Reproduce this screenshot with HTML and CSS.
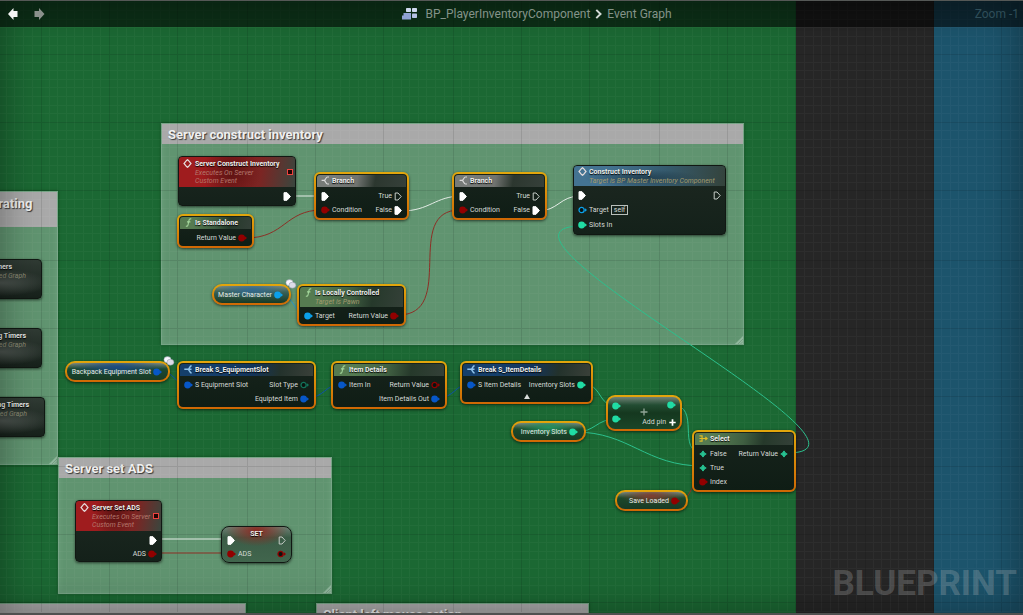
FILE: index.html
```html
<!DOCTYPE html>
<html lang="en">
<head>
<meta charset="utf-8">
<title>BP_PlayerInventoryComponent - Event Graph</title>
<link rel="stylesheet" href="styles.css">
</head>
<body>
<svg class="defs" aria-hidden="true">
  <defs>
    <symbol id="exec" viewBox="0 0 8 9"><path d="M1 .7H4L7.4 4.5 4 8.3H1Z" fill="#fff" stroke="#fff" stroke-linejoin="round"/></symbol>
    <symbol id="exec-open" viewBox="0 0 8 9"><path d="M1.2 1H4L7.2 4.5 4 8H1.2Z" fill="none" stroke="#c4cbc6" stroke-linejoin="round"/></symbol>
    <symbol id="pin" viewBox="0 0 9 8"><circle cx="3.6" cy="4" r="3.4" fill="currentColor"/><path d="M6.6 2 9 4 6.6 6Z" fill="currentColor"/></symbol>
    <symbol id="pin-open" viewBox="0 0 9 8"><circle cx="3.6" cy="4" r="2.6" fill="#0b120e" stroke="currentColor" stroke-width="1.3"/><path d="M7 2.2 9 4 7 5.8Z" fill="currentColor"/></symbol>
    <symbol id="wild" viewBox="0 0 9 8"><path d="M4 .9C5 2.6 5.6 3.200 7.200 4 5.600 4.800 5 5.400 4 7.100 3 5.400 2.400 4.800 .8 4 2.400 3.200 3 2.600 4 .9Z" fill="currentColor" stroke="currentColor"/></symbol>
    <symbol id="event" viewBox="0 0 9 9"><path d="M3.600 1.400 1 4.500 3.600 7.600M5.400 1.400 8 4.500 5.400 7.600M3.200 1.800 4.500.7 5.800 1.800M3.200 7.200 4.500 8.300 5.800 7.200" fill="none" stroke="#e4dcdc" stroke-width="1.200"/></symbol>
    <symbol id="branch" viewBox="0 0 9 9"><path d="M8 1H6.500C4.600 1 4.800 4.300 3 4.400 4.800 4.500 4.600 8 6.500 8H8M.6 4.400H3" fill="none" stroke="#d8d8d8" stroke-width="1.200"/></symbol>
    <symbol id="fn" viewBox="0 0 9 10"><path d="M7.600 1.200C5.800.4 5.200 1.500 4.900 3.200L4.100 7.200C3.800 8.900 3 9.500 1.600 8.900M2.800 4.300H6.600" fill="none" stroke="#a3d69b" stroke-width="1.200"/></symbol>
    <symbol id="break" viewBox="0 0 9 9"><path d="M.3 4.300H4M7.600.8C5.400 1 5.800 3.600 4 4.300 5.800 5 5.400 7.800 7.600 8M5 4.300H7.500" fill="none" stroke="#8fc4ec" stroke-width="1.400"/></symbol>
    <symbol id="select" viewBox="0 0 10 8"><path d="M.5 1H3.400V7H.5M.5 4H9M7 2.200 9 4 7 5.800" fill="none" stroke="#e2bd25" stroke-width="1.300"/></symbol>
    <symbol id="grip" viewBox="0 0 8 8"><path d="M8 0V8H0Z" fill="#a9c9b3" opacity=".65"/><path d="M3 8 8 3M5.500 8 8 5.500" stroke="#668f73" stroke-width=".6"/></symbol>
    <symbol id="bubble" viewBox="0 0 12 10"><g stroke="#8a90a0" stroke-width=".5"><ellipse cx="4.500" cy="3.700" rx="3.600" ry="3.100" fill="#f8f8ff"/><ellipse cx="7.400" cy="6.200" rx="3.500" ry="3" fill="#dcdce8"/></g></symbol>
  </defs>
</svg>

<main class="graph">
  <div class="zone zone-green"></div>
  <div class="zone zone-blue"></div>

  <section class="comment c-rating"><h2>Client rating</h2><svg class="grip"><use href="#grip"/></svg></section>
  <section class="comment c-construct"><h2>Server construct inventory</h2><svg class="grip"><use href="#grip"/></svg></section>
  <section class="comment c-ads"><h2>Server set ADS</h2><svg class="grip"><use href="#grip"/></svg></section>
  <section class="comment c-bottom"><h2></h2></section>
  <section class="comment c-mouse"><h2>Client left mouse action</h2></section>

  <svg class="grid" aria-hidden="true">
    <defs><pattern id="cells" x="40" y="53" width="206" height="206" patternUnits="userSpaceOnUse" viewBox="0 0 206 206">
      <path class="minor" d="M9 0V206M17 0V206M26 0V206M34 0V206M43 0V206M52 0V206M60 0V206M77 0V206M86 0V206M94 0V206M103 0V206M112 0V206M120 0V206M129 0V206M146 0V206M155 0V206M163 0V206M172 0V206M180 0V206M189 0V206M198 0V206M0 9H206M0 17H206M0 26H206M0 34H206M0 43H206M0 52H206M0 60H206M0 77H206M0 86H206M0 94H206M0 103H206M0 112H206M0 120H206M0 129H206M0 146H206M0 155H206M0 163H206M0 172H206M0 180H206M0 189H206M0 198H206"/>
      <path class="major" d="M1 0V206M69 0V206M137 0V206M0 1H206M0 69H206M0 137H206"/>
    </pattern></defs>
    <rect width="100%" height="100%" fill="url(#cells)"/>
  </svg>

  <svg class="wires" aria-hidden="true">
    <g class="w-exec"><path d="M290 196H322M401 211C430 211 435 196 462 196M538 211C558 211 560 196 580 196M155 539H230" /></g>
    <g class="w-bool"><path d="M246 238C285 238 285 210 322 210M398 315C458 315 402 210 460 210M155 553H230M680 500C692 500 690 480 703 480"/></g>
    <g class="w-object"><path d="M281 295C294 295 294 315 307 315"/></g>
    <g class="w-struct"><path d="M160 371C174 371 174 384 187 384M306 398C325 398 325 384 342 384M437 398C455 398 455 384 470 384"/></g>
    <g class="w-slots"><path d="M583 384C602 384 598 406 616 406M575 432C596 432 596 419 616 419M575 432C630 432 645 466 703 466M672 405C702 405 675 453 703 453M787 453C912 453 452 226 582 226"/></g>
  </svg>

  <article class="node plain-node n-timer1"><header><h3>Timers</h3><p>Collapsed Graph</p></header></article>
  <article class="node plain-node n-timer2"><header><h3>Starting Timers</h3><p>Collapsed Graph</p></header></article>
  <article class="node plain-node n-timer3"><header><h3>Starting Timers</h3><p>Collapsed Graph</p></header></article>

  <article class="node event n-construct-event">
    <header><svg class="icon"><use href="#event"/></svg><div><h3>Server Construct Inventory</h3><p>Executes On Server<br>Custom Event</p></div><i class="delegate"></i></header>
    <div class="body"><div class="row"><span></span><span class="port"><svg class="exec"><use href="#exec"/></svg></span></div></div>
  </article>

  <article class="node selected pure n-standalone">
    <header><svg class="icon"><use href="#fn"/></svg><h3>Is Standalone</h3></header>
    <div class="body"><div class="row"><span></span><span class="port">Return Value<svg class="pin bool"><use href="#pin"/></svg></span></div></div>
  </article>

  <article class="node selected flow n-branch1">
    <header><svg class="icon"><use href="#branch"/></svg><h3>Branch</h3></header>
    <div class="body">
      <div class="row"><span class="port"><svg class="exec"><use href="#exec"/></svg></span><span class="port">True<svg class="exec"><use href="#exec-open"/></svg></span></div>
      <div class="row"><span class="port"><svg class="pin bool"><use href="#pin"/></svg>Condition</span><span class="port">False<svg class="exec"><use href="#exec"/></svg></span></div>
    </div>
  </article>

  <article class="node selected flow n-branch2">
    <header><svg class="icon"><use href="#branch"/></svg><h3>Branch</h3></header>
    <div class="body">
      <div class="row"><span class="port"><svg class="exec"><use href="#exec"/></svg></span><span class="port">True<svg class="exec"><use href="#exec-open"/></svg></span></div>
      <div class="row"><span class="port"><svg class="pin bool"><use href="#pin"/></svg>Condition</span><span class="port">False<svg class="exec"><use href="#exec"/></svg></span></div>
    </div>
  </article>

  <article class="node call n-construct">
    <header><svg class="icon"><use href="#event"/></svg><div><h3>Construct Inventory</h3><p>Target is BP Master Inventory Component</p></div></header>
    <div class="body">
      <div class="row"><span class="port"><svg class="exec"><use href="#exec"/></svg></span><span class="port"><svg class="exec"><use href="#exec-open"/></svg></span></div>
      <div class="row"><span class="port"><svg class="pin object"><use href="#pin-open"/></svg>Target<b class="self">self</b></span></div>
      <div class="row"><span class="port"><svg class="pin slots"><use href="#pin"/></svg>Slots In</span></div>
    </div>
  </article>

  <article class="node selected pill p-object n-master"><span class="port">Master Character<svg class="pin object"><use href="#pin"/></svg></span></article>
  <svg class="bubble b-master"><use href="#bubble"/></svg>

  <article class="node selected pure n-local">
    <header><svg class="icon"><use href="#fn"/></svg><div><h3>Is Locally Controlled</h3><p>Target is Pawn</p></div></header>
    <div class="body"><div class="row"><span class="port"><svg class="pin object"><use href="#pin"/></svg>Target</span><span class="port">Return Value<svg class="pin bool"><use href="#pin"/></svg></span></div></div>
  </article>

  <article class="node selected pill p-struct n-backpack"><span class="port">Backpack Equipment Slot<svg class="pin struct"><use href="#pin"/></svg></span></article>
  <svg class="bubble b-backpack"><use href="#bubble"/></svg>

  <article class="node selected break n-break-slot">
    <header><svg class="icon"><use href="#break"/></svg><h3>Break S_EquipmentSlot</h3></header>
    <div class="body">
      <div class="row"><span class="port"><svg class="pin struct"><use href="#pin"/></svg>S Equipment Slot</span><span class="port">Slot Type<svg class="pin enum"><use href="#pin-open"/></svg></span></div>
      <div class="row"><span></span><span class="port">Equipted Item<svg class="pin struct"><use href="#pin"/></svg></span></div>
    </div>
  </article>

  <article class="node selected pure n-details">
    <header><svg class="icon"><use href="#fn"/></svg><h3>Item Details</h3></header>
    <div class="body">
      <div class="row"><span class="port"><svg class="pin struct"><use href="#pin"/></svg>Item In</span><span class="port">Return Value<svg class="pin bool"><use href="#pin-open"/></svg></span></div>
      <div class="row"><span></span><span class="port">Item Details Out<svg class="pin struct"><use href="#pin"/></svg></span></div>
    </div>
  </article>

  <article class="node selected break n-break-details">
    <header><svg class="icon"><use href="#break"/></svg><h3>Break S_ItemDetails</h3></header>
    <div class="body">
      <div class="row"><span class="port"><svg class="pin struct"><use href="#pin"/></svg>S Item Details</span><span class="port">Inventory Slots<svg class="pin slots"><use href="#pin"/></svg></span></div>
      <button class="collapse" aria-label="Hide unconnected pins"><svg viewBox="0 0 6 5"><path d="M3 0 6 5H0Z" fill="#d8dcd9"/></svg></button>
    </div>
  </article>

  <article class="node selected pill p-slots n-slots"><span class="port">Inventory Slots<svg class="pin slots"><use href="#pin"/></svg></span></article>

  <article class="node selected compact n-add">
    <div class="stack"><svg class="pin slots"><use href="#pin"/></svg><svg class="pin slots"><use href="#pin"/></svg></div>
    <div class="stack end"><svg class="pin slots"><use href="#pin"/></svg><button class="add-pin">Add pin<svg viewBox="0 0 7 7"><path d="M3.500 .3V6.700M.3 3.500H6.700" stroke="#fff" stroke-width="1.700"/></svg></button></div>
    <svg class="plus" viewBox="0 0 8 8"><path d="M4 .5V7.500M.5 4H7.500" stroke="#91a698" stroke-width="1.300"/></svg>
  </article>

  <article class="node selected pure n-select">
    <header><svg class="icon"><use href="#select"/></svg><h3>Select</h3></header>
    <div class="body">
      <div class="row"><span class="port"><svg class="pin wild"><use href="#wild"/></svg>False</span><span class="port">Return Value<svg class="pin wild"><use href="#wild"/></svg></span></div>
      <div class="row"><span class="port"><svg class="pin wild"><use href="#wild"/></svg>True</span></div>
      <div class="row"><span class="port"><svg class="pin bool"><use href="#pin"/></svg>Index</span></div>
    </div>
  </article>

  <article class="node selected pill p-bool n-loaded"><span class="port">Save Loaded<svg class="pin bool"><use href="#pin"/></svg></span></article>

  <article class="node event n-ads-event">
    <header><svg class="icon"><use href="#event"/></svg><div><h3>Server Set ADS</h3><p>Executes On Server<br>Custom Event</p></div><i class="delegate"></i></header>
    <div class="body">
      <div class="row"><span></span><span class="port"><svg class="exec"><use href="#exec"/></svg></span></div>
      <div class="row"><span></span><span class="port">ADS<svg class="pin bool"><use href="#pin"/></svg></span></div>
    </div>
  </article>

  <article class="node set n-set">
    <h3>SET</h3>
    <div class="row"><span class="port"><svg class="exec"><use href="#exec"/></svg></span><span class="port"><svg class="exec"><use href="#exec-open"/></svg></span></div>
    <div class="row"><span class="port"><svg class="pin bool"><use href="#pin"/></svg>ADS</span><span class="port"><svg class="pin bool"><use href="#pin-open"/></svg></span></div>
  </article>

  <div class="vignette"></div>
  <div class="watermark">BLUEPRINT</div>

  <nav class="toolbar">
    <div class="history">
      <button aria-label="Back"><svg viewBox="0 0 12 14"><path d="M1 7 6.500 1V4H10.500V10H6.500V13Z" fill="#f4f4f4"/></svg></button>
      <button aria-label="Forward"><svg viewBox="0 0 12 14"><path d="M11.500 7 6 1V4H1.500V10H6V13Z" fill="#8b918c"/></svg></button>
    </div>
    <div class="crumbs">
      <svg class="bp-icon" viewBox="0 0 15 12"><g fill="#cfd8ef"><rect x="4" y="0" width="5" height="4" rx=".7"/><rect x="10" y="0" width="5" height="4" rx=".7"/><path fill="#8fa2d4" d="M1.500 5H9V11.500H0V7.500H1.500Z"/><rect x="10" y="5.500" width="5" height="4.500" rx=".7" fill="#b5c1e3"/></g></svg>
      <a href="#">BP_PlayerInventoryComponent</a>
      <svg class="chevron" viewBox="0 0 6 9"><path d="M1 .8 4.800 4.500 1 8.200" fill="none" stroke="#d4dad6" stroke-width="1.800"/></svg>
      <a href="#">Event Graph</a>
    </div>
    <div class="zoom">Zoom -1</div>
  </nav>
</main>
</body>
</html>
```
FILE: styles.css
```css
* { box-sizing: border-box; }
body { margin: 0; background: #242424; font-family: Roboto, "Liberation Sans", sans-serif; }
h2, h3, p { margin: 0; }
button { margin: 0; padding: 0; border: 0; background: none; color: inherit; font: inherit; }
svg { display: block; flex: none; }
.defs { position: absolute; width: 0; height: 0; }

.graph {
  position: relative;
  min-height: 100vh;
  overflow: hidden;
  background: #262626;
  border-top: 1px solid #555856;
  border-bottom: 2px solid #505050;
}
.grid, .wires, .vignette { position: absolute; inset: 0; width: 100%; height: 100%; }
.grid { top: -1px; }
.wires { top: -1px; }
.vignette { box-shadow: inset 0 0 40px rgba(0, 0, 0, .4); pointer-events: none; }
.minor { stroke: #fff; stroke-opacity: .03; shape-rendering: crispEdges; }
.major { stroke: #000; stroke-opacity: .1; shape-rendering: crispEdges; }

.zone { position: absolute; top: 0; bottom: 0; }
.zone-green { left: 0; width: 796px; background: #1b6833; }
.zone-blue { left: 934px; right: 0; background: #1c546c; }

/* Toolbar */
.toolbar {
  position: relative;
  display: grid;
  grid-template-columns: 1fr auto 1fr;
  align-items: center;
  height: 26px;
  padding: 0 4px 0 7px;
  background: rgba(0, 0, 0, .56);
  font-size: 12px;
  color: #849389;
}
.history { display: flex; gap: 14px; }
.history svg { width: 12px; height: 14px; }
.crumbs { display: flex; align-items: center; gap: 5px; padding-left: 48px; }
.crumbs a { color: inherit; text-decoration: none; }
.bp-icon { width: 15px; height: 12px; margin-right: 3px; }
.chevron { width: 7px; height: 10px; }
.zoom { justify-self: end; color: #2f4e59; }

.watermark {
  position: absolute;
  right: 6px;
  bottom: 7px;
  color: rgba(190, 190, 190, .27);
  font: 700 35px/44px Roboto, sans-serif;
}

/* Comment boxes */
.comment {
  position: absolute;
  border: 1px solid #76a485;
  background: #609470;
  box-shadow: 0 0 3px rgba(0, 40, 10, .5), inset 0 0 6px rgba(140, 190, 155, .3);
}
.comment h2 {
  min-height: 19px;
  padding-left: 6px;
  background: #a9a9a9;
  color: #f0f0f0;
  font-size: 13px;
  line-height: 22px;
  height: 20px;
  text-shadow: 1px 1px 1px #333;
  white-space: nowrap;
}
.grip { position: absolute; right: 0; bottom: 0; width: 8px; height: 8px; }
.c-rating { left: -40px; top: 190px; width: 98px; height: 274px; }
.c-rating h2 { height: 35px; padding: 1px 33px 0 0; text-align: right; }
.c-construct { left: 161px; top: 122px; width: 583px; height: 222px; }
.c-ads { left: 58px; top: 456px; width: 274px; height: 137px; }
.c-bottom { left: -20px; top: 602px; width: 266px; height: 60px; }
.c-mouse { left: 316px; top: 602px; width: 273px; height: 60px; }

/* Wires */
.wires g { fill: none; stroke-width: 1; }
.w-exec { stroke: #e4ece6; }
.w-bool { stroke: #8c2f25; }
.w-object { stroke: #2a92c4; }
.w-struct { stroke: #0d51a8; }
.w-slots { stroke: #2cc08d; }

/* Nodes */
.node {
  position: absolute;
  border: 1px solid #111813;
  border-radius: 4px;
  background: linear-gradient(#1d2821, #14211a);
  box-shadow: 0 1px 3px rgba(0, 0, 0, .6);
  color: #d5dad6;
  font-size: 7px;
  line-height: 14px;
  white-space: nowrap;
}
.node.selected {
  border: 2px solid transparent;
  padding: 1px;
  border-radius: 6px;
  background: linear-gradient(#17231c, #0f1d15) padding-box, linear-gradient(#e2a70c, #cf6704) border-box;
}
.node header {
  position: relative;
  display: flex;
  align-items: flex-start;
  gap: 2px;
  min-height: 12px;
  padding: 1px 4px;
  border-radius: 3px 3px 0 0;
  line-height: 9px;
}
.node h3 { color: #eceeec; font-size: 7px; line-height: 10px; text-shadow: 0 1px 1px #000; }
.node p { color: #a29a6d; font-size: 7px; line-height: 8px; font-style: italic; }
.icon { width: 9px; height: 9px; }
.node.event header { min-height: 30px; padding: 2px 4px; gap: 3px; background: radial-gradient(circle at 45% 50%, #5b1312, transparent 45%), linear-gradient(100deg, #9f1c1e 25%, #7b2523 70%, #39463e); }
.event p { color: #b4786d; }
.call header { background: radial-gradient(ellipse at 45% 60%, rgba(25, 50, 65, .7), transparent 50%), linear-gradient(100deg, #447392 20%, #355a6d 60%, #34433b); }
.pure header { background: linear-gradient(100deg, #567b51 20%, #3f5e41 50%, #26392b 70%, #344038); }
.flow header { background: linear-gradient(100deg, #777b78 20%, #707370 45%, #2c372f 65%, #36403a); }
.break header { background: linear-gradient(100deg, #153f6b 25%, #13345b 55%, #23322c 75%, #3a4039); }
.call header, .n-local header { min-height: 20px; }
.delegate { position: absolute; right: 2px; top: 12px; width: 6px; height: 6px; border: 1px solid #f0433f; background: #250504; }

.body { display: flex; flex-direction: column; padding: 2px 4px 0 4px; }
.row { display: flex; justify-content: space-between; height: 14px; }
.port { display: flex; align-items: center; gap: 2px; }
.pin { width: 9px; height: 8px; }
.exec { width: 8px; height: 9px; }
.bool { color: #920000; }
.object { color: #0ba0ea; }
.struct { color: #0757c8; }
.slots { color: #20dca4; }
.enum { color: #13735a; }
.wild { color: #27c493; }
.self { padding: 0 2px; border: 1px solid #b9bfbb; font-weight: 400; line-height: 8px; }

.collapse { align-self: center; height: 9px; padding: 2px; }
.collapse svg { width: 6px; height: 5px; }

.node.pill { display: flex; align-items: center; justify-content: flex-end; height: 21px; padding-right: 6px; border-radius: 10px; }
.node.pill .port { color: #e5ece7; }
.p-object { --tint: #32698f; --base: #396258; }
.p-struct { --tint: #1b4a83; --base: #1a4931; }
.p-slots { --tint: #23915f; --base: #1b4a2d; }
.p-bool { --tint: #803d30; --base: #1d482b; }
.node.pill {
  background: radial-gradient(ellipse 45% 50% at 50% 25%, var(--tint), transparent) padding-box,
    linear-gradient(#79877d, var(--base) 35%, #183a25) padding-box,
    linear-gradient(#e2a70c, #cf6704) border-box;
}
.node.compact {
  display: flex;
  justify-content: space-between;
  padding: 3px 4px;
  border-radius: 9px;
  background: linear-gradient(#718277, #234d33 25%, #15381f 50%, #1a4528) padding-box, linear-gradient(#e2a70c, #cf6704) border-box;
}
.stack { display: flex; flex-direction: column; gap: 5px; padding-top: 2px; }
.stack.end { align-items: flex-end; gap: 8px; padding-top: 1px; }
.plus { position: absolute; left: 32px; top: 11px; width: 8px; height: 8px; }
.add-pin { display: flex; align-items: center; gap: 3px; line-height: 10px; }
.add-pin svg { width: 7px; height: 7px; }

.set { padding: 1px 5px; border-radius: 8px; background: radial-gradient(ellipse 45% 45% at 50% 10%, #8b2a22, transparent), linear-gradient(#6e8074, #3b5c47 30%, #41664d); }
.set h3 { height: 5px; text-align: center; line-height: 12px; }

.plain-node header { display: block; padding: 2px 15px 2px 0; text-align: right; }
.plain-node p { color: #8b8b74; }
.plain-node { background: radial-gradient(ellipse 60% 35% at 50% 60%, #4c544f, transparent), linear-gradient(#303b34, #17211b); }

.bubble { position: absolute; width: 12px; height: 10px; }
.b-master { left: 285px; top: 278px; }
.b-backpack { left: 163px; top: 355px; }

/* Node placement on the canvas */
.n-timer1 { left: -40px; top: 258px; width: 82px; height: 40px; }
.n-timer1 h3 { padding-right: 14px; }
.n-timer2 { left: -40px; top: 327px; width: 82px; height: 40px; }
.n-timer3 { left: -40px; top: 396px; width: 85px; height: 40px; }
.n-timer3 p { padding-right: 2px; }
.n-construct-event { left: 178px; top: 155px; width: 118px; padding-bottom: 2px; }
.n-standalone { left: 177px; top: 213px; width: 77px; }
.n-branch1 { left: 314px; top: 171px; width: 95px; }
.n-branch2 { left: 452px; top: 171px; width: 95px; }
.n-construct { left: 573px; top: 164px; width: 153px; padding-bottom: 2px; }
.n-construct .body { gap: 1px; }
.n-master { left: 212px; top: 283px; width: 79px; }
.n-local { left: 297px; top: 283px; width: 109px; }
.n-backpack { left: 65px; top: 360px; width: 105px; }
.n-break-slot { left: 177px; top: 360px; width: 139px; }
.n-details { left: 331px; top: 360px; width: 116px; }
.n-break-details { left: 460px; top: 360px; width: 133px; padding-bottom: 2px; }
.n-slots { left: 511px; top: 420px; width: 75px; }
.n-add { left: 606px; top: 394px; width: 76px; height: 36px; }
.n-select { left: 692px; top: 429px; width: 104px; }
.n-loaded { left: 615px; top: 489px; width: 73px; }
.n-ads-event { left: 75px; top: 499px; width: 87px; }
.n-set { left: 221px; top: 525px; width: 71px; }
```
